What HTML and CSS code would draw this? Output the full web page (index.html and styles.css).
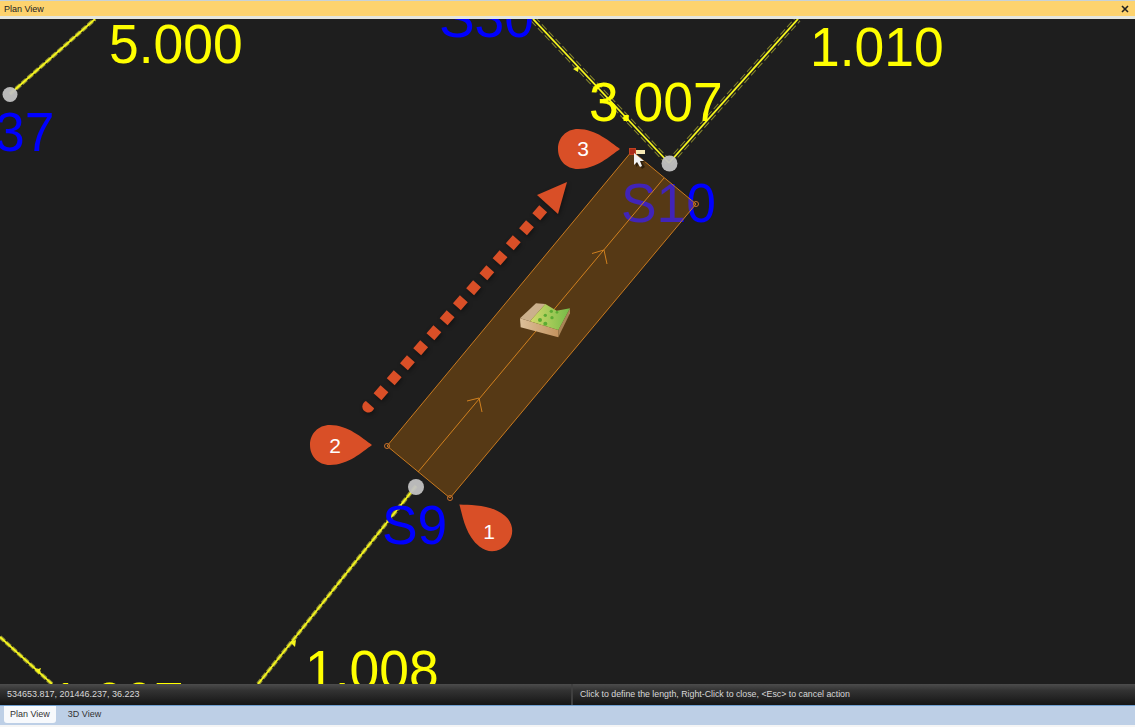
FILE: index.html
```html
<!DOCTYPE html>
<html lang="en">
<head>
  <meta charset="UTF-8">
  <title>Plan View</title>
  <link rel="stylesheet" href="styles.css">
</head>
<body>
<div class="app">
  <div class="title-bar">
    <span>Plan View</span>
    <svg class="close-icon" width="8" height="8" viewBox="0 0 8 8"><path d="M1 1L7 7M7 1L1 7"/></svg>
  </div>

  <div class="canvas">
    <svg class="plan" width="1135" height="665" viewBox="0 19 1135 665">
      <defs>
        <path id="drop" d="M42 0C32 -7 18 -20 0 -20C-12 -20 -20 -11 -20 0C-20 11 -12 20 0 20C18 20 32 7 42 0Z"/>
        <g id="roads-single">
          <path d="M10 94L95 19"/>
          <path d="M416 486L258 684"/>
          <path d="M0 637L52 684"/>
        </g>
        <g id="roads-double">
          <path d="M533 19L669 163"/>
          <path d="M669 163L798 19"/>
        </g>
        <linearGradient id="grass" x1="0" y1="0" x2="1" y2="0">
          <stop offset="0" stop-color="#d3d96a"/>
          <stop offset="1" stop-color="#74bb47"/>
        </linearGradient>
        <linearGradient id="soil" x1="0" y1="0" x2="1" y2="0">
          <stop offset="0" stop-color="#dcc09a"/>
          <stop offset="1" stop-color="#c4935f"/>
        </linearGradient>
      </defs>

      <!-- road lines -->
      <use class="ghost" href="#roads-single"/>
      <use class="road" href="#roads-single"/>
      <use class="ghost-wide" href="#roads-double"/>
      <use class="ghost-gap" href="#roads-double"/>
      <use class="road" href="#roads-double"/>
      <g class="road-arrow">
        <path d="M573 69L579 66L578 72Z"/>
        <path d="M622 118L628 115L627 122Z"/>
        <path d="M35 670L41 668L39 674Z"/>
        <path d="M290 642L296 640L295 647Z"/>
      </g>

      <!-- labels -->
      <text class="chainage" transform="translate(109 63) scale(1 1.05)">5.000</text>
      <text class="chainage" transform="translate(810 66) scale(1 1.05)">1.010</text>
      <text class="chainage" transform="translate(589 121) scale(1 1.05)">3.007</text>
      <text class="chainage" transform="translate(305 689) scale(1 1.05)">1.008</text>
      <text class="chainage" transform="translate(50 721) scale(1 1.05)">1.007</text>
      <text class="station" transform="translate(439 37) scale(1 1.05)">S30</text>
      <text class="station" transform="translate(-5 151) scale(1 1.05)">37</text>
      <text class="station" transform="translate(382 544) scale(1 1.05)">S9</text>
      <text class="station" transform="translate(621 222) scale(1 1.05)">S10</text>

      <circle class="node" cx="10" cy="94.5" r="7.5"/>
      <circle class="node" cx="669.5" cy="163.5" r="8"/>
      <circle class="node" cx="416" cy="487" r="8"/>

      <!-- area being drawn -->
      <polygon class="area" points="632,151 696,204 450,498 387,446"/>
      <path class="area-line" d="M418 472L664 178"/>
      <path class="area-line" d="M467 401L479 398L482 412"/>
      <path class="area-line" d="M592 253.5L604 250L607 264"/>
      <circle class="vertex" cx="696" cy="204" r="2.5"/>
      <circle class="vertex" cx="450" cy="498" r="2.5"/>
      <circle class="vertex" cx="387" cy="446" r="2.5"/>
      <rect class="vertex-active" x="629.5" y="148.5" width="6" height="6"/>
      <rect class="tip" x="636" y="150" width="9" height="4"/>
      <path class="cursor-shadow" d="M636 155V167L639 164L642 169L645 167L642 162H646Z"/>
      <path class="cursor" d="M634 153V165L637 162L640 167L642 166L640 161H644Z"/>

      <!-- terrain icon -->
      <g transform="translate(490 280) scale(0.3333)">
        <path fill="url(#soil)" d="M90 115L205 150V172L92 142Z"/>
        <path fill="#a98457" d="M205 150L240 85V100L205 172Z"/>
        <path fill="#cbb08c" d="M90 115L138 70L166 72L120 124Z"/>
        <path fill="url(#grass)" d="M120 124L166 72L200 92L240 85L205 150Z"/>
        <g fill="#5cab33">
          <circle cx="150" cy="120" r="6"/>
          <circle cx="166" cy="106" r="5"/>
          <circle cx="184" cy="94" r="5"/>
          <circle cx="166" cy="131" r="6"/>
          <circle cx="186" cy="113" r="5"/>
          <circle cx="201" cy="97" r="4"/>
        </g>
      </g>

      <!-- dotted direction arrow -->
      <g class="shadowed">
        <path class="callout" d="M365.9 401.1A6 6 0 1 0 374.1 408.3Z"/>
        <path class="dash-line" d="M377.5 396.7L543.5 208.5"/>
        <polygon class="callout" points="567,182 537,195 558,214"/>
      </g>

      <!-- numbered callouts -->
      <use class="callout" href="#drop" transform="translate(330 445)"/>
      <use class="callout" href="#drop" transform="translate(492 531) rotate(219)"/>
      <use class="callout" href="#drop" transform="translate(578 149)"/>
      <text class="callout-num" x="335" y="453">2</text>
      <text class="callout-num" x="489" y="539">1</text>
      <text class="callout-num" x="583" y="156">3</text>
    </svg>
  </div>

  <div class="status-bar">
    <div class="status-coords">534653.817, 201446.237, 36.223</div>
    <div class="status-msg">Click to define the length, Right-Click to close, &lt;Esc&gt; to cancel action</div>
  </div>

  <div class="tab-strip">
    <div class="tab active">Plan View</div>
    <div class="tab">3D View</div>
  </div>
</div>
</body>
</html>
```

FILE: styles.css
```css
html, body { margin: 0; height: 100%; overflow: hidden; background: #fff; }
body { font-family: "Liberation Sans", Arial, sans-serif; }
.app { display: flex; flex-direction: column; height: 727px; }

/* title bar */
.title-bar {
  height: 15px;
  flex: none;
  display: flex;
  align-items: center;
  justify-content: space-between;
  padding: 0 6px 0 4px;
  background: #fdd36e;
  border-top: 1px solid #c6d2d8;
  border-bottom: 3px solid #e4e6de;
  font-size: 9px;
  color: #222;
}
.close-icon path { stroke: #222; stroke-width: 1.6; fill: none; }

/* drawing area */
.canvas { flex: 1; min-height: 0; background: #1e1e1e; overflow: hidden; }
.plan { display: block; }
.ghost { stroke: #8f8f30; stroke-width: 4; stroke-dasharray: 6 2; fill: none; }
.ghost-wide { stroke: #86862c; stroke-width: 6.5; stroke-dasharray: 7 3; fill: none; }
.ghost-gap { stroke: #1e1e1e; stroke-width: 4.5; fill: none; }
.road { stroke: #f6f61e; stroke-width: 1.8; fill: none; }
.road-arrow path { fill: #f6f61e; }
.chainage { font-family: "Liberation Sans", Arial, sans-serif; font-size: 53.4px; fill: #ffff00; }
.station { font-family: "Liberation Sans", Arial, sans-serif; font-size: 53.4px; fill: #0000ff; }
.node { fill: #c2c2c2; fill-opacity: 0.95; }
.area { fill: #e88000; fill-opacity: 0.28; stroke: #c97a1e; stroke-width: 1; }
.area-line { stroke: #d0801f; stroke-width: 1; fill: none; }
.vertex { fill: none; stroke: #c9702a; stroke-width: 1; }
.vertex-active { fill: #a82c18; stroke: #c04020; stroke-width: 1; }
.tip { fill: #f6e8b4; }
.cursor { fill: #f2f2f2; }
.cursor-shadow { fill: #000; fill-opacity: 0.45; }
.callout { fill: #d94f27; }
.shadowed { filter: drop-shadow(1px 2px 2px rgba(0, 0, 0, 0.4)); }
.dash-line { stroke: #d94f27; stroke-width: 10.5; stroke-dasharray: 10.5 9.5; fill: none; }
.callout-num { font-family: "Liberation Sans", Arial, sans-serif; font-size: 21px; fill: #fff; text-anchor: middle; }

/* status bar */
.status-bar {
  height: 21px;
  flex: none;
  display: flex;
  background: linear-gradient(#4c4c4c, #333 30%, #151515);
  color: #d8d8d8;
  font-size: 9px;
  line-height: 21px;
}
.status-coords { width: 564px; padding-left: 7px; border-right: 2px solid #3f3f3f; }
.status-msg { padding-left: 7px; font-size: 8.8px; }

/* view tabs */
.tab-strip {
  height: 19px;
  flex: none;
  display: flex;
  padding-left: 4px;
  background: #bdcfe6;
  border-top: 1px solid #6f9fd0;
  border-bottom: 2px solid #f5f5f5;
  font-size: 9px;
  color: #333;
}
.tab { padding: 0 6px; height: 17px; line-height: 17px; }
.tab.active { background: #f7f9fc; border-radius: 0 0 3px 3px; margin-right: 6px; }
```
